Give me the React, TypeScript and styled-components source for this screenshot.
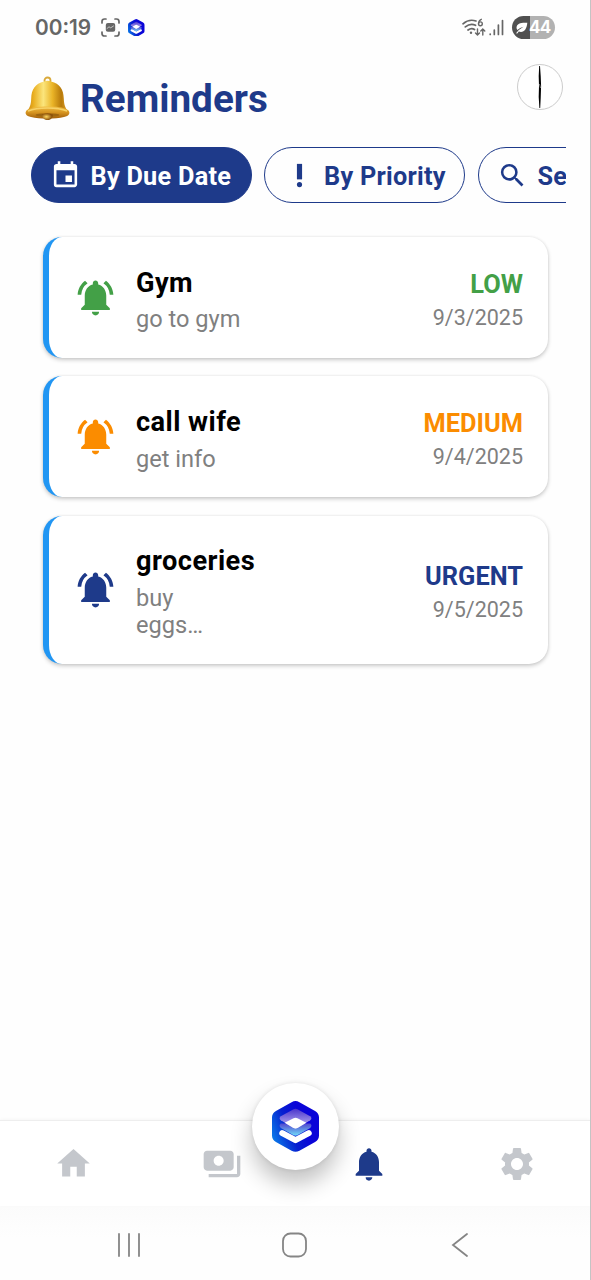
import React from "react";
import styled, { createGlobalStyle } from "styled-components";
import type { IconType } from "react-icons";
import {
  MdEvent,
  MdHome,
  MdNotifications,
  MdNotificationsActive,
  MdPayments,
  MdPriorityHigh,
  MdSearch,
  MdSettings,
} from "react-icons/md";

const NAVY = "#1e3a8a";

const GlobalStyle = createGlobalStyle`
  * { box-sizing: border-box; }
  body { margin: 0; background: #fefefe; font-family: Roboto, "Liberation Sans", sans-serif; }
  svg { display: block; flex: none; }
`;

const Screen = styled.div`
  width: 591px;
  height: 1280px;
  display: flex;
  flex-direction: column;
  overflow: hidden;
  background: #fefefe;
  border-right: 1px solid #c4c4c4;
`;

const StatusBar = styled.div`
  height: 54px;
  padding: 1px 35px 0 35px;
  display: flex;
  align-items: center;
  justify-content: space-between;
`;

const StatusGroup = styled.div<{ $gap: number }>`
  display: flex;
  align-items: center;
  gap: ${(p) => p.$gap}px;
`;

const Clock = styled.span`
  width: 58px;
  font: 600 20.8px/24px Inter, sans-serif;
  color: #666;
  white-space: nowrap;
`;

const Battery = styled.div`
  width: 43px;
  height: 23px;
  margin-left: 5px;
  border-radius: 12px;
  display: flex;
  align-items: center;
  gap: 1px;
  padding-left: 3px;
  background: linear-gradient(90deg, #505050 43%, #b2b2b2 43%);
  color: #fff;
  font: 700 17px/23px Inter, sans-serif;
  letter-spacing: -0.7px;
`;

const Header = styled.header`
  height: 93px;
  padding: 10px 27px 0 24px;
  display: flex;
  align-items: flex-start;
  justify-content: space-between;
`;

const Heading = styled.div`
  display: flex;
  align-items: center;
  padding-top: 10px;
  gap: 9px;
`;

const Title = styled.h1`
  margin: 0;
  padding-top: 1px;
  font-size: 38.7px;
  line-height: 48px;
  font-weight: 700;
  color: ${NAVY};
`;

const Avatar = styled.div`
  width: 46px;
  height: 46px;
  border: 1px solid #ccc;
  border-radius: 50%;
  background: #fff;
  display: flex;
  align-items: center;
  justify-content: center;
`;

const Filters = styled.div`
  height: 56px;
  margin: 0 24px 0 30.5px;
  display: flex;
  gap: 12.5px;
  overflow: hidden;
`;

const Pill = styled.button<{ $active?: boolean; $width: number }>`
  flex: none;
  width: ${(p) => p.$width}px;
  height: 56px;
  padding: 0 0 0 18.5px;
  display: flex;
  align-items: center;
  gap: 9.5px;
  border: 1.6px solid ${NAVY};
  border-radius: 28px;
  background: ${(p) => (p.$active ? NAVY : "transparent")};
  color: ${(p) => (p.$active ? "#fff" : NAVY)};
  font: 700 25.3px/30px Roboto, sans-serif;
  letter-spacing: 0.25px;
  white-space: nowrap;
`;

const PillLabel = styled.span`
  padding-top: 3px;
`;

const List = styled.main`
  flex: 1;
  padding: 33.5px 42.5px 0 43px;
  display: flex;
  flex-direction: column;
  gap: 18.5px;
`;

const Card = styled.article<{ $height: number }>`
  height: ${(p) => p.$height}px;
  padding: 0 24.5px 0 25px;
  display: flex;
  align-items: center;
  border-left: 6.5px solid #2196f3;
  border-radius: 19px;
  background: #fff;
  box-shadow: 0 2px 4px rgba(0, 0, 0, 0.2), 0 0 3px rgba(0, 0, 0, 0.08);
`;

const CardText = styled.div`
  flex: 1;
  margin-left: 19px;
  padding-top: 6px;
`;

const CardTitle = styled.div`
  font-size: 27.2px;
  line-height: 32px;
  font-weight: 700;
  letter-spacing: 0.45px;
  color: #000;
`;

const CardNote = styled.div`
  width: 110px;
  margin-top: 7.5px;
  font-size: 23.6px;
  line-height: 27.5px;
  color: #808080;
`;

const CardMeta = styled.div`
  padding-top: 5px;
  text-align: right;
`;

const Priority = styled.div<{ $color: string }>`
  font-size: 25.4px;
  line-height: 32px;
  font-weight: 700;
  color: ${(p) => p.$color};
`;

const DueDate = styled.div`
  margin-top: 4px;
  font-size: 21.5px;
  line-height: 28px;
  color: #808080;
`;

const TabBar = styled.nav`
  position: relative;
  height: 86px;
  border-top: 1px solid #eee;
  box-shadow: 0 -1px 3px rgba(0, 0, 0, 0.03);
  background: #fff;
  display: grid;
  grid-template-columns: repeat(4, 147.7px);
  align-items: center;
  justify-items: center;
`;

const Tab = styled.div<{ $active?: boolean }>`
  color: ${(p) => (p.$active ? NAVY : "#c4c7cc")};
`;

const CenterButton = styled.div`
  position: absolute;
  left: 251.5px;
  top: -38px;
  width: 87px;
  height: 87px;
  border-radius: 50%;
  background: #fff;
  box-shadow: 0 14px 22px rgba(0, 0, 0, 0.24), 0 0 4px rgba(0, 0, 0, 0.1);
  display: flex;
  align-items: center;
  justify-content: center;
`;

const SystemNav = styled.div`
  height: 74px;
  padding: 26px 46px 0 46px;
  display: grid;
  grid-template-columns: repeat(3, 1fr);
  justify-items: center;
  background: linear-gradient(#fbfbfb 0, #fefefe 32px);
`;

function LogoMark({ size, id }: { size: number; id: string }) {
  return (
    <svg width={size} height={size * (52 / 48)} viewBox="0 0 48 52">
      <defs>
        <linearGradient id={`${id}-base`} x1="0" y1="0.7" x2="0.65" y2="0.4">
          <stop offset="0" stopColor="#0a78e8" />
          <stop offset="0.55" stopColor="#0620d0" />
          <stop offset="1" stopColor="#0a04d8" />
        </linearGradient>
        <linearGradient id={`${id}-top`} x1="0" y1="0" x2="0" y2="1">
          <stop offset="0" stopColor="#4a35cc" />
          <stop offset="1" stopColor="#c5bdf5" />
        </linearGradient>
        <linearGradient id={`${id}-mid`} x1="0" y1="0" x2="0" y2="1">
          <stop offset="0" stopColor="#5146d0" />
          <stop offset="1" stopColor="#72dcf8" />
        </linearGradient>
      </defs>
      <path d="M20 1.200q4-2.200 8 0l16 9q4 2.200 4 6.500v18.600q0 4.300-4 6.500l-16 9q-4 2.200-8 0l-16-9q-4-2.200-4-6.500V16.700q0-4.300 4-6.500z" fill={`url(#${id}-base)`} />
      <path d="M9 23h30q2.500 2 0 4.500L26 35q-2 1-4 0L9 27.500Q6.500 25 9 23z" fill={`url(#${id}-mid)`} />
      <path d="M22 8.500q2-1 4 0l13 7.200q2.500 2 0 4l-13 7.800q-2 1-4 0L9 19.700q-2.500-2 0-4z" fill={`url(#${id}-top)`} />
      <path d="M22 17.500q2-1 4 0l9 4.800-9 5.200q-2 1-4 0l-9-5.200z" fill="#fff" />
      <path d="M10.500 32.800L24 40l13.500-7.200" fill="none" stroke="#fff" strokeWidth="6.200" strokeLinecap="round" strokeLinejoin="round" />
    </svg>
  );
}

function GoldenBell() {
  return (
    <svg width="47" height="48" viewBox="0 0 47 48">
      <defs>
        <linearGradient id="bell-body" x1="0" x2="1">
          <stop offset="0" stopColor="#c9850f" />
          <stop offset="0.16" stopColor="#e9ae20" />
          <stop offset="0.4" stopColor="#fbe57c" />
          <stop offset="0.62" stopColor="#eab427" />
          <stop offset="0.83" stopColor="#b87a0b" />
          <stop offset="1" stopColor="#e3a62b" />
        </linearGradient>
        <linearGradient id="bell-rim" x1="0" y1="0" x2="0" y2="1">
          <stop offset="0" stopColor="#f0bd42" />
          <stop offset="0.5" stopColor="#d69420" />
          <stop offset="1" stopColor="#a35f0a" />
        </linearGradient>
        <radialGradient id="bell-clapper" cx="0.4" cy="0.5">
          <stop offset="0" stopColor="#ffd75f" />
          <stop offset="1" stopColor="#8d520b" />
        </radialGradient>
      </defs>
      <circle cx="23.500" cy="5.500" r="3" fill="none" stroke="#d9a93a" strokeWidth="1.800" />
      <path d="M20 6.500q3.500-1.500 7 0c9 2 12.500 8 12.800 17 .2 6 1.200 9 4.500 13.500H2.700C6 32.500 7 29.500 7.200 23.500 7.500 14.500 11 8.500 20 6.500z" fill="url(#bell-body)" />
      <path d="M3 35c5-3 12-3.500 20.500-3.500S39 32 44 35c3 3 1 6-4 7-9 2-24 2-33 0-5-1-7-4-4-7z" fill="url(#bell-rim)" />
      <path d="M4 36c6-2.500 12-3 19.500-3s13.500.5 19.500 3" fill="none" stroke="#f7d266" strokeWidth="1.500" />
      <ellipse cx="23.500" cy="40" rx="12" ry="1.800" fill="#9d6510" />
      <path d="M18 39.500q5.500-2 11 0c0 3.500-2.500 5.500-5.500 5.500s-5.500-2-5.500-5.500z" fill="url(#bell-clapper)" />
    </svg>
  );
}

function ScreenshotIcon() {
  return (
    <svg width="19" height="19" viewBox="0 0 19 19" fill="none" stroke="#666" strokeWidth="1.700" strokeLinecap="round">
      <path d="M1 5V3.500Q1 1 3.500 1H5M14 1h1.500Q18 1 18 3.500V5M18 14v1.500q0 2.500-2.500 2.500H14M5 18H3.500Q1 18 1 15.500V14" />
      <rect x="4.800" y="5" width="9.400" height="8.800" rx="2" fill="#666" stroke="none" />
      <path d="M6 10.500l2-1.700 1.700 1L12.500 8" stroke="#ddd" strokeWidth=".8" />
    </svg>
  );
}

function WifiIcon() {
  return (
    <svg width="24" height="19" viewBox="0 0 24 19" fill="none" stroke="#666" strokeWidth="1.700" strokeLinecap="round">
      <path d="M1 5.800Q7 .6 14 3M3.300 8.900Q8.500 4.800 13.500 7.300M6 12q3.500-2.600 6.500-.5" />
      <circle cx="9" cy="14.700" r="1.200" fill="#666" stroke="none" />
      <path d="M19.300 1.300q-2.500 1-2.700 4" strokeWidth="1.400" />
      <circle cx="18.400" cy="5.800" r="1.900" strokeWidth="1.400" />
      <path d="M15.500 11v6m-2-2l2 2 2-2M20.800 17v-6m-2 2l2-2 2 2" strokeWidth="1.400" />
    </svg>
  );
}

function SignalIcon() {
  return (
    <svg width="15" height="17" viewBox="0 0 15 17" stroke="#666" strokeWidth="1.700" strokeLinecap="round">
      <path d="M1.200 15v.5M5.300 11v4.500M9.400 6v9.500M13.500 1.500v14" />
    </svg>
  );
}

function LeafIcon() {
  return (
    <svg width="13" height="12" viewBox="0 0 13 12">
      <path d="M12.300.8C7 .2 1.700 1.300 1.500 5.500c0 1 .3 1.800.8 2.400Q5 5.800 8.500 4.800 4 7.300 1 11.200l1.300.3 1.500-1.900c5 1.700 8-2.400 8.500-8.800z" fill="#fff" />
    </svg>
  );
}

const filters: { label: string; Icon: IconType; width: number; active?: boolean }[] = [
  { label: "By Due Date", Icon: MdEvent, width: 221, active: true },
  { label: "By Priority", Icon: MdPriorityHigh, width: 201 },
  { label: "Search", Icon: MdSearch, width: 170 },
];

const reminders = [
  { title: "Gym", note: "go to gym", priority: "LOW", color: "#43a047", date: "9/3/2025", height: 121 },
  { title: "call wife", note: "get info", priority: "MEDIUM", color: "#fb8c00", date: "9/4/2025", height: 121 },
  { title: "groceries", note: "buy\neggs…", priority: "URGENT", color: NAVY, date: "9/5/2025", height: 148 },
];

const NoteLine = styled.div``;

export default function App() {
  return (
    <>
      <GlobalStyle />
      <Screen>
        <StatusBar>
          <StatusGroup $gap={8}>
            <Clock>00:19</Clock>
            <ScreenshotIcon />
            <LogoMark size={16.5} id="status" />
          </StatusGroup>
          <StatusGroup $gap={3}>
            <WifiIcon />
            <SignalIcon />
            <Battery>
              <LeafIcon />
              44
            </Battery>
          </StatusGroup>
        </StatusBar>
        <Header>
          <Heading>
            <GoldenBell />
            <Title>Reminders</Title>
          </Heading>
          <Avatar>
            <svg width="4" height="42" viewBox="0 0 4 42">
              <path d="M1.200 0h.8L2.700 10l.4 10-.4 12-.5 10h-.8L.7 31 1 20 .7 10z" fill="#000" />
              <path d="M1.500 18l1 4" stroke="#aaa" strokeWidth=".7" />
            </svg>
          </Avatar>
        </Header>
        <Filters>
          {filters.map(({ label, Icon, width, active }) => (
            <Pill key={label} $width={width} $active={active}>
              <Icon size={31} />
              <PillLabel>{label}</PillLabel>
            </Pill>
          ))}
        </Filters>
        <List>
          {reminders.map((r) => (
            <Card key={r.title} $height={r.height}>
              <MdNotificationsActive size={43} color={r.color} />
              <CardText>
                <CardTitle>{r.title}</CardTitle>
                <CardNote>
                  {r.note.split("\n").map((line) => (
                    <NoteLine key={line}>{line}</NoteLine>
                  ))}
                </CardNote>
              </CardText>
              <CardMeta>
                <Priority $color={r.color}>{r.priority}</Priority>
                <DueDate>{r.date}</DueDate>
              </CardMeta>
            </Card>
          ))}
        </List>
        <TabBar>
          <Tab><MdHome size={39} /></Tab>
          <Tab><MdPayments size={40} /></Tab>
          <Tab $active><MdNotifications size={40} /></Tab>
          <Tab><MdSettings size={40} /></Tab>
          <CenterButton>
            <LogoMark size={47} id="center" />
          </CenterButton>
        </TabBar>
        <SystemNav>
          <svg width="26" height="26" viewBox="0 0 26 26" stroke="#858585" strokeWidth="1.800" strokeLinecap="round">
            <path d="M3 2v22M13 2v22M23 2v22" />
          </svg>
          <svg width="26" height="26" viewBox="0 0 26 26" fill="none" stroke="#858585" strokeWidth="1.800">
            <rect x="1" y="1.500" width="23" height="23" rx="7.500" />
          </svg>
          <svg width="26" height="26" viewBox="0 0 26 26" fill="none" stroke="#858585" strokeWidth="1.800" strokeLinecap="round">
            <path d="M19 2L5 13l14 11" />
          </svg>
        </SystemNav>
      </Screen>
    </>
  );
}
